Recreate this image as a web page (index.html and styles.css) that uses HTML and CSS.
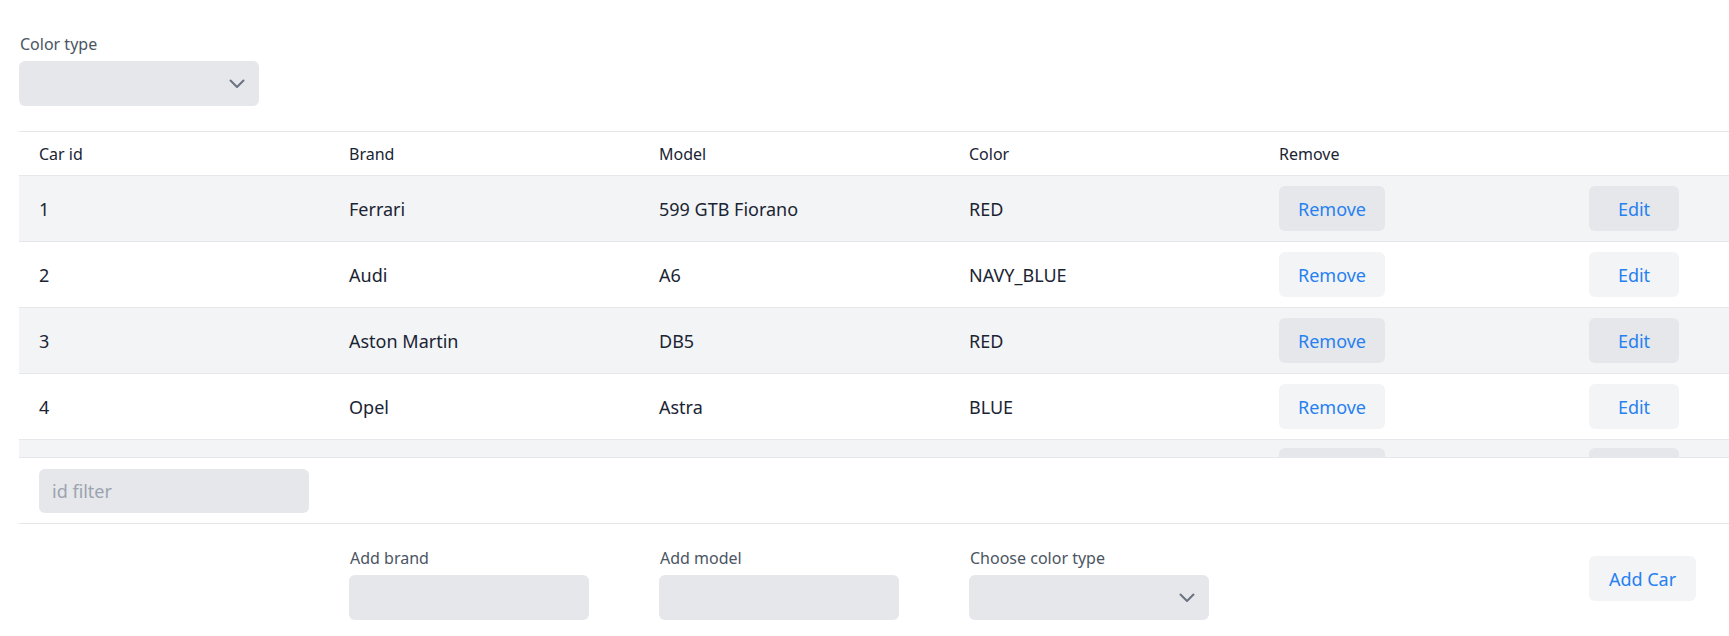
FILE: index.html
```html
<!DOCTYPE html>
<html lang="en">
<head>
<meta charset="utf-8">
<title>Cars</title>
<link rel="stylesheet" href="styles.css">
</head>
<body>
<div class="page">
  <div class="field top-field">
    <label class="label">Color type</label>
    <div class="select">
      <svg class="chev" width="16" height="10" viewBox="0 0 16 10"><path d="M1.5 1.5 L8 8 L14.5 1.5" fill="none" stroke="#6b7280" stroke-width="2" stroke-linecap="round" stroke-linejoin="round"/></svg>
    </div>
  </div>

  <div class="table">
    <div class="row head">
      <div class="cell">Car id</div>
      <div class="cell">Brand</div>
      <div class="cell">Model</div>
      <div class="cell">Color</div>
      <div class="cell">Remove</div>
      <div class="cell"></div>
    </div>
    <div class="body">
      <div class="row item odd">
        <div class="cell">1</div><div class="cell">Ferrari</div><div class="cell">599 GTB Fiorano</div><div class="cell">RED</div>
        <div class="cell"><button class="btn btn-remove">Remove</button></div><div class="cell"><button class="btn btn-edit">Edit</button></div>
      </div>
      <div class="row item">
        <div class="cell">2</div><div class="cell">Audi</div><div class="cell">A6</div><div class="cell">NAVY_BLUE</div>
        <div class="cell"><button class="btn btn-remove">Remove</button></div><div class="cell"><button class="btn btn-edit">Edit</button></div>
      </div>
      <div class="row item odd">
        <div class="cell">3</div><div class="cell">Aston Martin</div><div class="cell">DB5</div><div class="cell">RED</div>
        <div class="cell"><button class="btn btn-remove">Remove</button></div><div class="cell"><button class="btn btn-edit">Edit</button></div>
      </div>
      <div class="row item">
        <div class="cell">4</div><div class="cell">Opel</div><div class="cell">Astra</div><div class="cell">BLUE</div>
        <div class="cell"><button class="btn btn-remove">Remove</button></div><div class="cell"><button class="btn btn-edit">Edit</button></div>
      </div>
      <div class="row item odd">
        <div class="cell"></div><div class="cell"></div><div class="cell"></div><div class="cell"></div>
        <div class="cell"><button class="btn btn-remove" aria-label="Remove"></button></div><div class="cell"><button class="btn btn-edit" aria-label="Edit"></button></div>
      </div>
    </div>
    <div class="row filter">
      <div class="cell"><input class="input filter-input" placeholder="id filter"></div>
    </div>
    <div class="row add">
      <div class="cell"></div>
      <div class="cell"><div class="field"><label class="label">Add brand</label><input class="input"></div></div>
      <div class="cell"><div class="field"><label class="label">Add model</label><input class="input"></div></div>
      <div class="cell"><div class="field"><label class="label">Choose color type</label>
        <div class="select"><svg class="chev" width="16" height="10" viewBox="0 0 16 10"><path d="M1.5 1.5 L8 8 L14.5 1.5" fill="none" stroke="#6b7280" stroke-width="2" stroke-linecap="round" stroke-linejoin="round"/></svg></div></div></div>
      <div class="cell"></div>
      <div class="cell"><button class="btn btn-add">Add Car</button></div>
    </div>
  </div>
</div>
</body>
</html>
```

FILE: styles.css
```css
* { box-sizing: border-box; }
html, body { margin: 0; padding: 0; background: #ffffff; overflow: hidden; }
body {
  font-family: "Noto Sans", "Open Sans", sans-serif;
  color: #1a2433;
}
.page {
  padding: 32px 0 0 19px;
  overflow: hidden;
}
.field {
  display: flex;
  flex-direction: column;
  gap: 5px;
}
.label {
  font-size: 16px;
  line-height: 24px;
  color: #4b5563;
  padding-left: 1px;
}
.select {
  width: 240px;
  height: 45px;
  background: #e5e7eb;
  border-radius: 6px;
  display: flex;
  align-items: center;
  justify-content: flex-end;
  padding-right: 14px;
}
.chev { display: block; }
.top-field { margin-bottom: 25px; width: 240px; }

.table {
  width: 1860px;
  border-top: 1px solid #e5e7eb;
}
.row {
  display: grid;
  grid-template-columns: repeat(6, 310px);
  align-items: center;
}
.cell {
  padding-left: 20px;
  white-space: nowrap;
}
.head {
  height: 44px;
  border-bottom: 1px solid #e5e7eb;
  font-size: 16px;
}
.body {
  height: 282px;
  overflow: hidden;
  border-bottom: 1px solid #e5e7eb;
}
.item {
  height: 66px;
  border-bottom: 1px solid #e5e7eb;
  font-size: 18px;
}
.item.odd { background: #f3f4f6; }
.btn {
  font-family: inherit;
  font-size: 18px;
  color: #2680f0;
  background: #f3f4f6;
  border: none;
  border-radius: 6px;
  height: 45px;
  padding: 0;
  cursor: pointer;
}
.item.odd .btn { background: #e5e7eb; }
.btn-remove { width: 106px; }
.btn-edit { width: 90px; }
.btn-add { width: 107px; }
.filter {
  height: 66px;
  border-bottom: 1px solid #e5e7eb;
}
.input {
  display: block;
  width: 240px;
  height: 45px;
  background: #e5e7eb;
  border: none;
  border-radius: 6px;
  font-family: inherit;
  font-size: 18px;
  padding: 0 13px;
  color: #1f2937;
  outline: none;
}
.input::placeholder { color: #9ca3af; }
.filter-input { width: 270px; height: 44px; }
.add {
  align-items: start;
  padding-top: 22px;
}
.add .btn-add { margin-top: 10px; }
```
